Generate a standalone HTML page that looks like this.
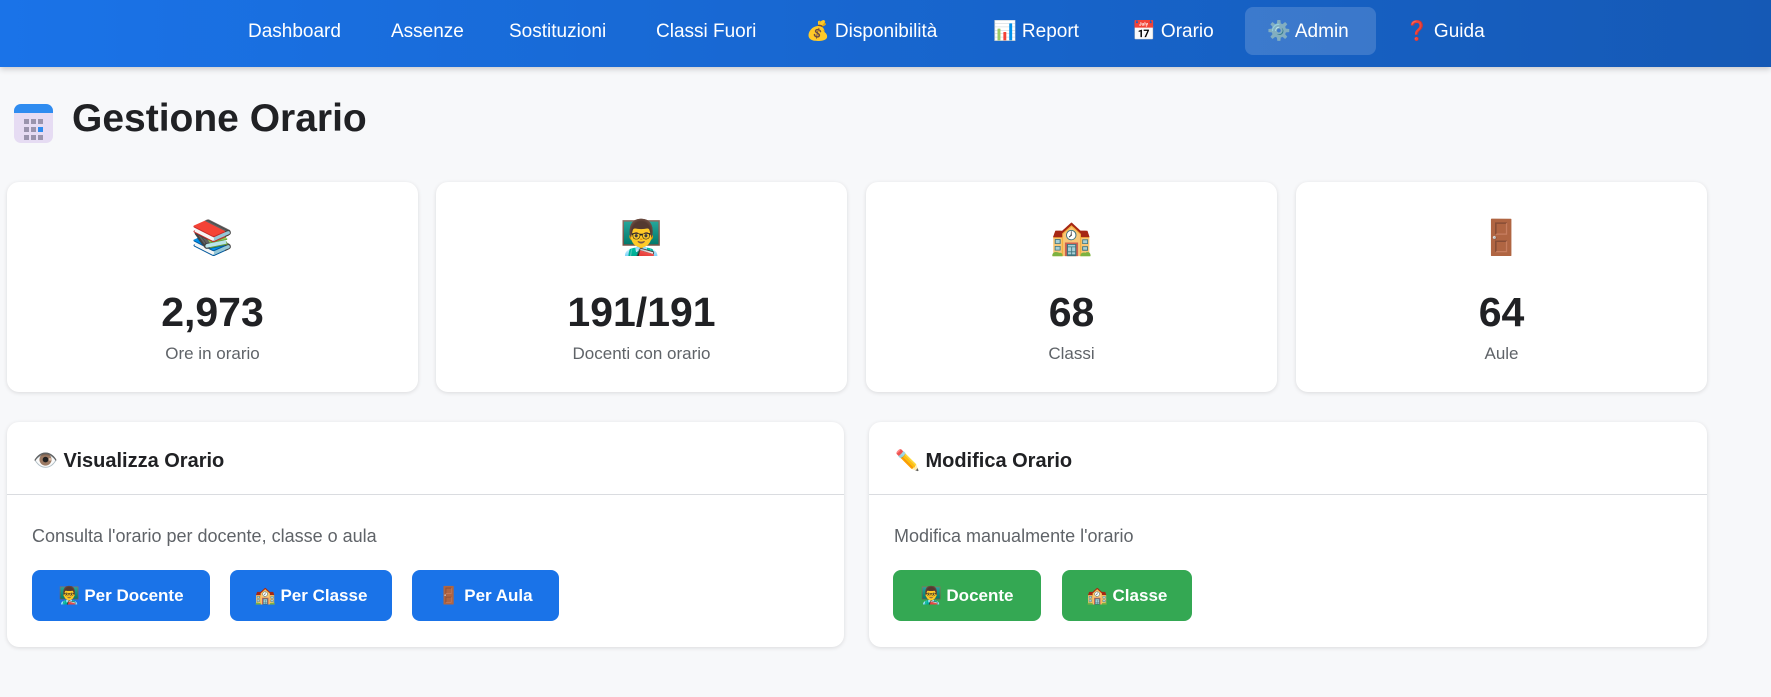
<!DOCTYPE html>
<html><head><meta charset="utf-8"><style>
*{box-sizing:border-box;margin:0;padding:0}
body{width:1771px;height:697px;overflow:hidden;background:#f7f8fa;font-family:"Liberation Sans","Noto Sans CJK JP",sans-serif;color:#202124}
.nav{height:67px;background:linear-gradient(90deg,#1a73e8,#1559b5);box-shadow:0 2px 6px rgba(0,0,0,.2);position:relative}
.nav a{position:absolute;top:7px;height:48px;line-height:50px;color:#fff;font-size:19px;text-decoration:none;padding:0 22px}
.nav a.act{background:rgba(255,255,255,.16);border-radius:8px}
h1{position:absolute;left:72px;top:97px;font-size:39px;font-weight:bold}
.cal{position:absolute;left:14px;top:104px;width:39px;height:39px;border-radius:7px;background:#e6dcf3;overflow:hidden}
.cal:before{content:"";position:absolute;left:0;top:0;right:0;height:9px;background:#2f8cf0}
.cal i{position:absolute;width:5px;height:5px;background:#9a94ad}
.card{position:absolute;background:#fff;border-radius:12px;box-shadow:0 1px 4px rgba(0,0,0,.12)}
.stat{top:182px;width:411px;height:210px;text-align:center}
.stat .e{position:absolute;top:36px;left:0;right:0;font-size:34px}
.num{position:absolute;top:107px;left:0;right:0;font-size:41px;font-weight:bold}
.lab{position:absolute;top:162px;left:0;right:0;font-size:17px;color:#5f6368}
.big{top:422px;height:225px}
.hd{height:73px;border-bottom:1px solid #dadce0;padding-left:26px;line-height:78px;font-size:20px;font-weight:bold}
.ds{position:absolute;top:104px;left:25px;font-size:18px;color:#5f6368}
.b{position:absolute;top:148px;height:51px;line-height:51px;border-radius:8px;color:#fff;font-weight:bold;font-size:17px;text-align:center}
.bl{background:#1a73e8}.gr{background:#34a853}
</style></head><body>
<div class="nav">
<a style="left:226px">Dashboard</a>
<a style="left:369px">Assenze</a>
<a style="left:487px">Sostituzioni</a>
<a style="left:634px">Classi Fuori</a>
<a style="left:784px">💰 Disponibilità</a>
<a style="left:971px">📊 Report</a>
<a style="left:1110px">📅 Orario</a>
<a class="act" style="left:1245px;width:131px">⚙️ Admin</a>
<a style="left:1383px">❓ Guida</a>
</div>
<div class="cal"><i style="left:10px;top:15px"></i><i style="left:17px;top:15px"></i><i style="left:24px;top:15px"></i><i style="left:10px;top:23px"></i><i style="left:17px;top:23px"></i><i style="left:24px;top:23px;background:#2f8cf0"></i><i style="left:10px;top:31px"></i><i style="left:17px;top:31px"></i><i style="left:24px;top:31px"></i></div>
<h1>Gestione Orario</h1>
<div class="card stat" style="left:7px"><div class="e">📚</div><div class="num">2,973</div><div class="lab">Ore in orario</div></div>
<div class="card stat" style="left:436px"><div class="e">👨‍🏫</div><div class="num">191/191</div><div class="lab">Docenti con orario</div></div>
<div class="card stat" style="left:866px"><div class="e">🏫</div><div class="num">68</div><div class="lab">Classi</div></div>
<div class="card stat" style="left:1296px"><div class="e">🚪</div><div class="num">64</div><div class="lab">Aule</div></div>
<div class="card big" style="left:7px;width:837px"><div class="hd">👁️ Visualizza Orario</div><div class="ds">Consulta l'orario per docente, classe o aula</div>
<div class="b bl" style="left:25px;width:178px">👨‍🏫 Per Docente</div>
<div class="b bl" style="left:223px;width:162px">🏫 Per Classe</div>
<div class="b bl" style="left:405px;width:147px">🚪 Per Aula</div></div>
<div class="card big" style="left:869px;width:838px"><div class="hd">✏️ Modifica Orario</div><div class="ds">Modifica manualmente l'orario</div>
<div class="b gr" style="left:24px;width:148px">👨‍🏫 Docente</div>
<div class="b gr" style="left:193px;width:130px">🏫 Classe</div></div>
</body></html>
